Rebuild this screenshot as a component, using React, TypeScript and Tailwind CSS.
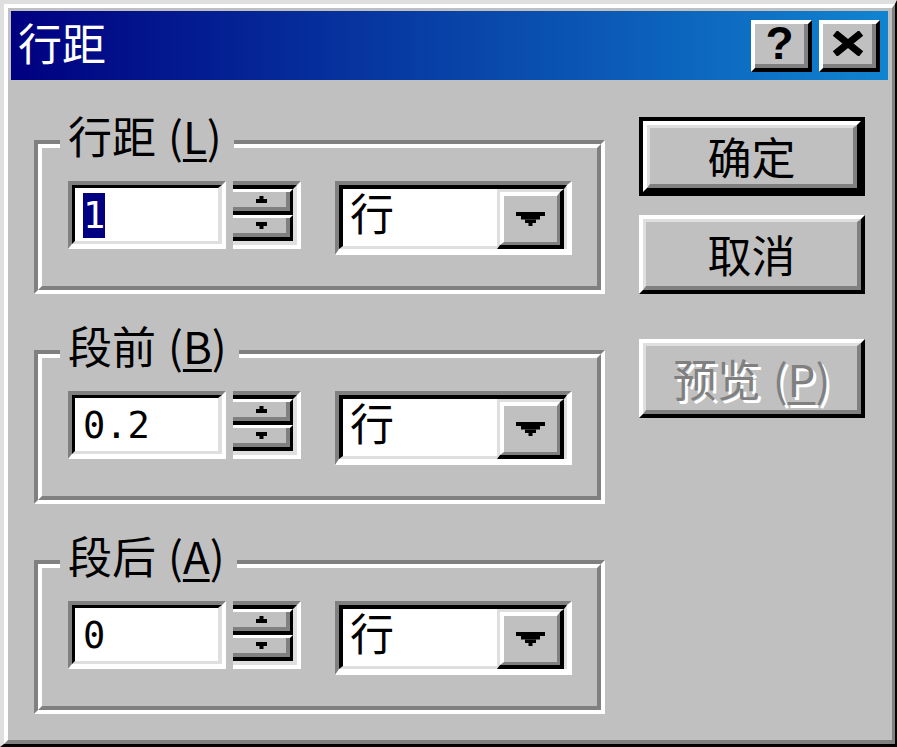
import React from "react";

function UpArrow() {
  return (
    <svg width="11" height="7" viewBox="0 0 11 7">
      <rect x="3.5" y="0" width="4" height="3" fill="#000" />
      <rect x="0" y="3" width="11" height="4" fill="#000" />
    </svg>
  );
}

function DownArrow() {
  return (
    <svg width="11" height="7" viewBox="0 0 11 7">
      <rect x="0" y="0" width="11" height="4" fill="#000" />
      <rect x="3.5" y="4" width="4" height="3" fill="#000" />
    </svg>
  );
}

function ComboArrow() {
  return (
    <svg width="29" height="14" viewBox="0 0 29 14">
      <rect x="0" y="0" width="29" height="4" fill="#000" />
      <rect x="5" y="4" width="19" height="3.5" fill="#000" />
      <rect x="9" y="7.5" width="11" height="3.5" fill="#000" />
      <rect x="12.5" y="11" width="4" height="3" fill="#000" />
    </svg>
  );
}

function SpinButton({ children }: { children: React.ReactNode }) {
  return (
    <div className="h-[26px] border-t-[3px] border-r-[3px] border-b-4 border-t-white border-r-black border-b-black">
      <div className="h-full border-r-4 border-b-4 border-r-[#808080] border-b-[#808080] bg-[#c0c0c0] flex items-center justify-center pl-[4px]">
        {children}
      </div>
    </div>
  );
}

function Row({ value, selected }: { value: string; selected?: boolean }) {
  return (
    <div className="flex items-start">
      {/* edit box */}
      <div className="w-[158px] h-[68px] border-t-4 border-l-4 border-r-4 border-b-[5px] border-t-[#808080] border-l-[#808080] border-r-white border-b-white">
        <div className="h-full border-t-[3px] border-l-[3px] border-r-4 border-b-[3px] border-t-black border-l-black border-r-[#dfdfdf] border-b-[#dfdfdf] bg-white pl-[8px] pt-[5px] font-['DejaVu_Sans_Mono',monospace] text-[37px] leading-[45px] text-black">
          {selected ? (
            <span className="inline-block bg-[#000080] text-white">{value}</span>
          ) : (
            <span>{value}</span>
          )}
        </div>
      </div>
      {/* spinner */}
      <div className="ml-[7px] w-[68px] h-[68px] border-t-4 border-r-4 border-b-4 border-t-[#808080] border-r-white border-b-white">
        <div className="h-full border-t-4 border-r-4 border-b-4 border-t-black border-r-[#dfdfdf] border-b-[#dfdfdf] flex flex-col">
          <SpinButton>
            <UpArrow />
          </SpinButton>
          <SpinButton>
            <DownArrow />
          </SpinButton>
        </div>
      </div>
      {/* combo */}
      <div className="ml-[34px] w-[237px] h-[74px] border-t-4 border-l-4 border-r-[5px] border-b-[6px] border-t-[#808080] border-l-[#808080] border-r-white border-b-white">
        <div className="h-full border-t-4 border-l-4 border-r-[3px] border-b-[3px] border-t-black border-l-black border-r-[#dfdfdf] border-b-[#dfdfdf] bg-white flex items-start">
          <div className="flex-1 pl-[7px] text-[44px] leading-[46px] text-black">行</div>
          <div className="w-[67px] h-[60px] shrink-0 border-t-[3px] border-l-[3px] border-r-4 border-b-4 border-t-[#dfdfdf] border-l-[#dfdfdf] border-r-black border-b-black">
            <div className="h-full border-t-4 border-l-4 border-r-[3px] border-b-[3px] border-t-white border-l-white border-r-[#808080] border-b-[#808080] bg-[#c0c0c0] flex items-center justify-center">
              <ComboArrow />
            </div>
          </div>
        </div>
      </div>
    </div>
  );
}

function Group({ name, mnemonic, value, selected }: { name: string; mnemonic: string; value: string; selected?: boolean }) {
  return (
    <div className="relative h-[154px] border-t-4 border-l-4 border-r-4 border-b-4 border-t-[#808080] border-l-[#808080] border-r-white border-b-white">
      <div className="h-full border-t-4 border-l-4 border-r-4 border-b-4 border-t-white border-l-white border-r-[#808080] border-b-[#808080] pl-[26px] pt-[33px]">
        <Row value={value} selected={selected} />
      </div>
      <div className="absolute left-[22px] -top-[33px] bg-[#c0c0c0] pl-[8px] pr-[12px] text-[44px] leading-[48px] text-black whitespace-nowrap">
        {name}
        <span className="ml-[12px]">
          (<span className="underline decoration-[3px] underline-offset-[5px]">{mnemonic}</span>)
        </span>
      </div>
    </div>
  );
}

function TitleButton({ children }: { children: React.ReactNode }) {
  return (
    <div className="w-[61px] h-[52px] border-t-4 border-l-4 border-r-4 border-b-4 border-t-white border-l-white border-r-black border-b-black">
      <div className="h-full border-r-4 border-b-4 border-r-[#808080] border-b-[#808080] bg-[#c0c0c0] flex items-center justify-center">
        {children}
      </div>
    </div>
  );
}

function PushButton({ children, isDefault }: { children: React.ReactNode; isDefault?: boolean }) {
  const inner = (
    <div className="h-full border-t-4 border-l-4 border-r-4 border-b-4 border-t-white border-l-white border-r-black border-b-black">
      <div className="h-full border-t-[3px] border-l-[3px] border-r-4 border-b-4 border-t-[#dfdfdf] border-l-[#dfdfdf] border-r-[#808080] border-b-[#808080] bg-[#c0c0c0] flex items-center justify-center text-[44px] leading-[48px] whitespace-nowrap">
        {children}
      </div>
    </div>
  );
  if (isDefault) {
    return <div className="h-[79px] border-4 border-black">{inner}</div>;
  }
  return <div className="h-[79px]">{inner}</div>;
}

export default function App() {
  return (
    <div className="w-[897px] h-[747px] bg-[#c0c0c0] border-t-4 border-l-4 border-r-2 border-b-[3px] border-t-[#dfdfdf] border-l-[#dfdfdf] border-r-black border-b-black font-['Noto_Sans_CJK_SC','Noto_Sans',sans-serif] overflow-hidden">
      <div className="h-full border-t-4 border-l-4 border-r-[3px] border-b-4 border-t-white border-l-white border-r-[#808080] border-b-[#808080] pt-[3px] pl-[3px] pr-[4px] flex flex-col">
        {/* title bar */}
        <div className="h-[69px] shrink-0 bg-[linear-gradient(to_right,#000080,#1084d0)] flex items-center pl-[7px] pr-[8px]">
          <div className="self-start mt-[7px] text-white text-[44px] leading-[48px]">行距</div>
          <div className="ml-auto flex gap-[7px]">
            <TitleButton>
              <span className="font-['Liberation_Sans',Arial,sans-serif] font-bold text-[46px] leading-none text-black -mt-[2px]">?</span>
            </TitleButton>
            <TitleButton>
              <svg width="32" height="25" viewBox="0 0 32 25">
                <path d="M3 2 L29 23 M29 2 L3 23" stroke="#000" strokeWidth="7" fill="none" />
              </svg>
            </TitleButton>
          </div>
        </div>
        {/* body */}
        <div className="flex pl-[23px] pt-[37px] gap-[34px]">
          <div className="w-[571px] mt-[23px] flex flex-col gap-[56px]">
            <Group name="行距" mnemonic="L" value="1" selected />
            <Group name="段前" mnemonic="B" value="0.2" />
            <Group name="段后" mnemonic="A" value="0" />
          </div>
          <div className="w-[226px] flex flex-col">
            <PushButton isDefault>确定</PushButton>
            <div className="mt-[19px]">
              <PushButton>取消</PushButton>
            </div>
            <div className="mt-[45px]">
              <PushButton>
                <span className="text-[#808080] [text-shadow:3px_3px_0_#ffffff]">
                  预览
                  <span className="ml-[12px]">
                    (<span className="underline decoration-[3px] underline-offset-[5px]">P</span>)
                  </span>
                </span>
              </PushButton>
            </div>
          </div>
        </div>
      </div>
    </div>
  );
}
